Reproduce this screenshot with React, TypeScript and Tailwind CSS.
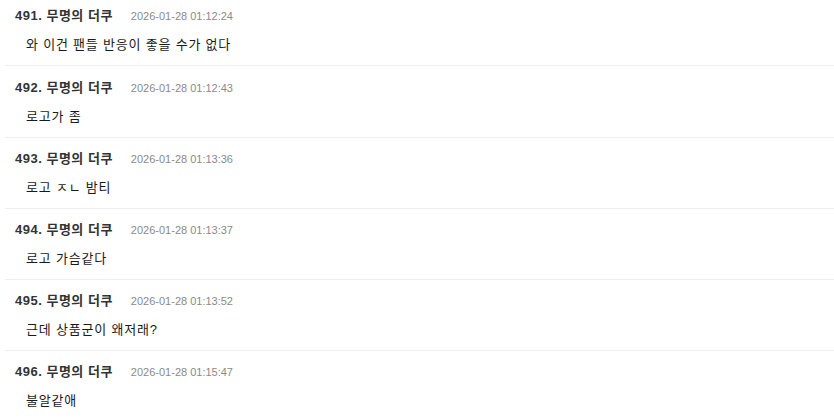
import React from "react";

const rows = [
  { n: 491, t: "2026-01-28 01:12:24", c: "와 이건 팬들 반응이 좋을 수가 없다" },
  { n: 492, t: "2026-01-28 01:12:43", c: "로고가 좀" },
  { n: 493, t: "2026-01-28 01:13:36", c: "로고 ㅈㄴ 밤티" },
  { n: 494, t: "2026-01-28 01:13:37", c: "로고 가슴같다" },
  { n: 495, t: "2026-01-28 01:13:52", c: "근데 상품군이 왜저래?" },
  { n: 496, t: "2026-01-28 01:15:47", c: "불알같애" },
];

export default function App() {
  return (
    <div
      className="w-[834px] h-[418px] overflow-hidden bg-white"
      style={{ fontFamily: '"Liberation Sans", "Noto Sans CJK KR", sans-serif' }}
    >
      <div className="pl-[5px]">
        {rows.map((r, i) => (
          <div
            key={r.n}
            className={`border-b border-[#eeeeee] pb-[10px] ${
              i === 0 ? "pt-[7px]" : i === 1 ? "pt-[13px]" : "pt-[12px]"
            }`}
          >
            <div className="flex items-center pl-[10px] h-[18px]">
              <span className="text-[13px] font-bold text-[#333333] tracking-[0.5px]">
                {r.n}. 무명의 더쿠
              </span>
              <span className="ml-[18px] text-[11px] text-[#8a8a8a]">{r.t}</span>
            </div>
            <div className="mt-[10px] h-[20px] flex items-center pl-[21px] text-[13px] text-[#1a1a1a] tracking-[0.8px]">
              {r.c}
            </div>
          </div>
        ))}
      </div>
    </div>
  );
}
